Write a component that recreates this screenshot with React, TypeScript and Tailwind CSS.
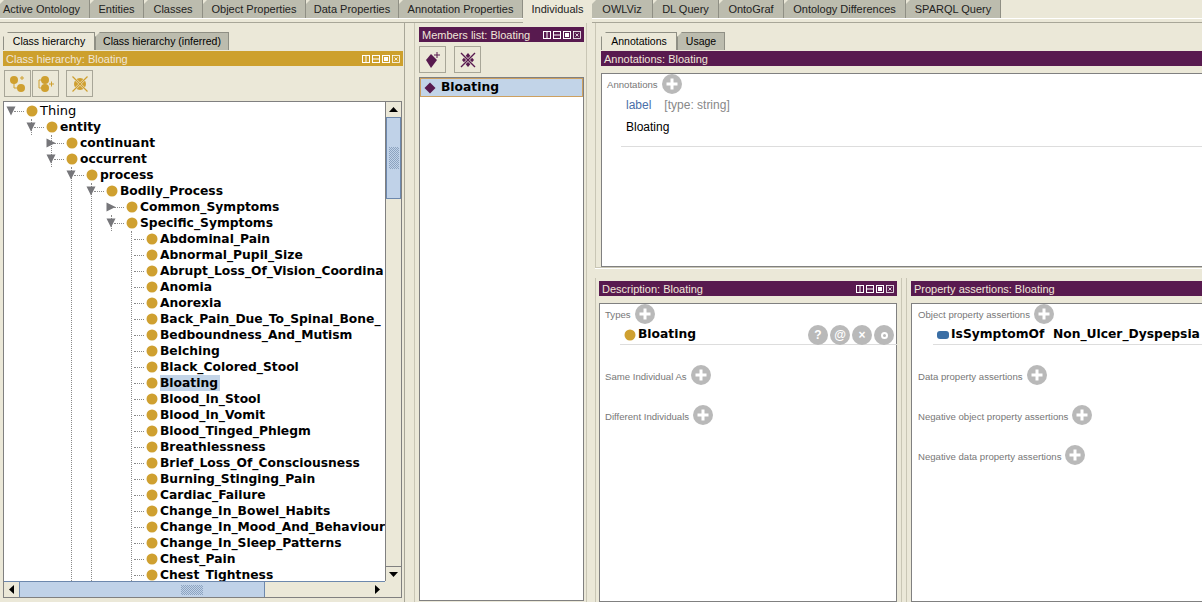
import React from "react";

const tabs = [
  ["Active Ontology", 90],
  ["Entities", 54],
  ["Classes", 59],
  ["Object Properties", 103],
  ["Data Properties", 93],
  ["Annotation Properties", 124],
  ["Individuals", 69],
  ["OWLViz", 61],
  ["DL Query", 66],
  ["OntoGraf", 65],
  ["Ontology Differences", 122],
  ["SPARQL Query", 95],
] as const;

const tree: [number, string, string, boolean?][] = [
  [0, "Thing", "d"],
  [1, "entity", "d"],
  [2, "continuant", "r"],
  [2, "occurrent", "d"],
  [3, "process", "d"],
  [4, "Bodily_Process", "d"],
  [5, "Common_Symptoms", "r"],
  [5, "Specific_Symptoms", "d"],
  [6, "Abdominal_Pain", ""],
  [6, "Abnormal_Pupil_Size", ""],
  [6, "Abrupt_Loss_Of_Vision_Coordina", ""],
  [6, "Anomia", ""],
  [6, "Anorexia", ""],
  [6, "Back_Pain_Due_To_Spinal_Bone_", ""],
  [6, "Bedboundness_And_Mutism", ""],
  [6, "Belching", ""],
  [6, "Black_Colored_Stool", ""],
  [6, "Bloating", "", true],
  [6, "Blood_In_Stool", ""],
  [6, "Blood_In_Vomit", ""],
  [6, "Blood_Tinged_Phlegm", ""],
  [6, "Breathlessness", ""],
  [6, "Brief_Loss_Of_Consciousness", ""],
  [6, "Burning_Stinging_Pain", ""],
  [6, "Cardiac_Failure", ""],
  [6, "Change_In_Bowel_Habits", ""],
  [6, "Change_In_Mood_And_Behaviour", ""],
  [6, "Change_In_Sleep_Patterns", ""],
  [6, "Chest_Pain", ""],
  [6, "Chest_Tightness", ""],
];

const ui = "font-['Liberation_Sans',sans-serif] text-[11px]";
const bold = "text-[12.3px] font-bold font-['DejaVu_Sans',sans-serif] text-black";

function Dot({ size = 12 }: { size?: number }) {
  return (
    <svg width={size} height={size} viewBox="0 0 12 12" className="shrink-0">
      <circle cx="6" cy="6" r="5.5" fill="#cfa030" />
    </svg>
  );
}

function WinControls() {
  return (
    <svg width="38" height="8" viewBox="0 0 38 8" className="shrink-0" fill="none" stroke="#fff">
      <rect x="0.5" y="0.5" width="7" height="7" />
      <path d="M4 0.5V7.5" />
      <rect x="10.5" y="0.5" width="7" height="7" />
      <path d="M10.5 4H17.5" />
      <rect x="20.5" y="0.5" width="7" height="7" />
      <rect x="22.5" y="2.5" width="3" height="3" fill="#fff" />
      <rect x="30.5" y="0.5" width="7" height="7" strokeWidth="0.8" />
      <path d="M32.5 2.5L35.5 5.5M35.5 2.5L32.5 5.5" strokeWidth="0.8" />
    </svg>
  );
}

function Header({ title, color, controls }: { title: string; color: string; controls?: boolean }) {
  return (
    <div
      className={`h-[15px] shrink-0 flex items-center justify-between pl-[3px] pr-[3px] text-[#f0e6d8] leading-none overflow-hidden whitespace-nowrap ${ui}`}
      style={{ backgroundColor: color }}
    >
      <span className="pt-[2px]">{title}</span>
      {controls && <WinControls />}
    </div>
  );
}

function ToolBtn({ children, className = "" }: { children: React.ReactNode; className?: string }) {
  return (
    <div className={`w-[27px] h-[27px] border border-[#a8a698] bg-[#ebe8d8] flex items-center justify-center ${className}`}>
      {children}
    </div>
  );
}

function Plus({ size = 20 }: { size?: number }) {
  return (
    <svg width={size} height={size} viewBox="0 0 20 20" className="shrink-0">
      <circle cx="10" cy="10" r="10" fill="#b9b9b9" />
      <path d="M10 4.5V15.5M4.5 10H15.5" stroke="#fff" strokeWidth="3" />
    </svg>
  );
}

function Arrow({ dir }: { dir: string }) {
  if (!dir) return null;
  return (
    <svg width="10" height="10" viewBox="0 0 10 10" className="absolute left-[-5px] top-[3px]">
      {dir === "d" ? <path d="M0.5 0.5H9.5L5 9.5Z" fill="#76767a" /> : <path d="M0.5 0.5V9.5L9.5 5Z" fill="#76767a" />}
    </svg>
  );
}

function TreeRow({ level, name, dir, sel }: { level: number; name: string; dir: string; sel?: boolean }) {
  const thing = name === "Thing";
  return (
    <div className="h-4 relative flex items-center whitespace-nowrap" style={{ paddingLeft: 20 * level + 22 }}>
      <div
        className="absolute h-0 border-t border-dotted border-[#8a8a8a] top-[8px] w-[10px]"
        style={{ left: 20 * level + 10 }}
      />
      <div className="absolute top-0" style={{ left: 20 * level + 7 }}>
        <Arrow dir={dir} />
      </div>
      <Dot />
      <span
        className={`ml-[2px] leading-4 ${bold} ${thing ? "font-normal text-[13px]" : ""} ${sel ? "bg-[#c2d4e8] pr-[2px]" : ""}`}
      >
        {name}
      </span>
    </div>
  );
}

function Triangle({ d }: { d: string }) {
  return (
    <svg width="9" height="9" viewBox="0 0 9 9">
      <path d={d} fill="#000" />
    </svg>
  );
}

function Grip({ vertical }: { vertical?: boolean }) {
  return (
    <svg width={vertical ? 10 : 22} height={vertical ? 22 : 10} className="shrink-0">
      {Array.from({ length: 22 }).map((_, i) =>
        Array.from({ length: 10 }).map((_, j) =>
          (i + j) % 2 === 0 ? (
            <rect key={`${i}-${j}`} x={vertical ? j : i} y={vertical ? i : j} width="1" height="1" fill="#8ca3c0" />
          ) : null
        )
      )}
    </svg>
  );
}

function SectionLabel({ text, className = "", textClass = "pt-[4px]" }: { text: string; className?: string; textClass?: string }) {
  return (
    <div className={`flex items-center gap-[4px] h-5 ${className}`}>
      <span className={`text-[9.6px] leading-none text-[#777] whitespace-nowrap font-['Liberation_Sans',sans-serif] ${textClass}`}>{text}</span>
      <Plus />
    </div>
  );
}

function Mini({ children }: { children: React.ReactNode }) {
  return (
    <div className="w-5 h-5 rounded-full bg-[#b9b9b9] flex items-center justify-center text-white font-bold text-[12px] leading-none font-['Liberation_Sans',sans-serif]">
      {children}
    </div>
  );
}

function SubTab({ label, active, w }: { label: string; active?: boolean; w: number }) {
  return (
    <div
      className={`h-[18px] flex items-center justify-center border border-b-0 border-[#8f8f84] whitespace-nowrap text-black font-['Liberation_Sans',sans-serif] text-[10.5px] ${active ? "bg-[#ebe8d8]" : "bg-[#bcbcae]"} [clip-path:polygon(5px_0,100%_0,100%_100%,0_100%,0_5px)]`}
      style={{ width: w }}
    >
      {label}
    </div>
  );
}

export default function App() {
  return (
    <div className="w-[1202px] h-[602px] bg-[#ebe8d8] overflow-hidden flex flex-col">
      <div className="h-[18px] shrink-0 flex">
        {tabs.map(([t, w], i) => (
          <div
            key={t}
            className={`shrink-0 flex items-center whitespace-nowrap text-[#222] ${ui} [clip-path:polygon(4px_0,100%_0,100%_100%,0_100%,0_4px)] ${
              i === 0 ? "justify-start pl-[3px]" : "justify-center"
            } ${t === "Individuals" ? "bg-[#ebe8d8] h-[23px] pb-[5px] z-10" : "bg-[#bcbcae] border-r border-[#8f8f84]"}`}
            style={{ width: w }}
          >
            {t}
          </div>
        ))}
      </div>
      <div className="h-[5px] shrink-0 border-b border-[#a8a698] border-t border-t-white" />
      <div className="flex-1 min-h-0 flex">
        {/* left */}
        <div className="w-[405px] shrink-0 pl-[2px] pt-[9px] border-r border-[#a8a698] flex flex-col">
          <div className="flex pl-[1px] h-[18px] shrink-0">
            <SubTab label="Class hierarchy" active w={92} />
            <SubTab label="Class hierarchy (inferred)" w={134} />
          </div>
          <div className="mt-[1px] mr-[1px] ml-[1px]">
            <Header title="Class hierarchy: Bloating" color="#cda02d" controls />
          </div>
          <div className="flex mt-[4px] h-[27px] pl-[2px] gap-[1px] shrink-0">
            <ToolBtn>
              <svg width="18" height="18" viewBox="0 0 18 18">
                <path d="M5 6V13H11" stroke="#cfa030" fill="none" />
                <circle cx="5" cy="5" r="4" fill="#cfa030" />
                <circle cx="12" cy="13" r="4" fill="#cfa030" />
                <path d="M11 3H15M13 1V5" stroke="#cfa030" />
              </svg>
            </ToolBtn>
            <ToolBtn>
              <svg width="18" height="18" viewBox="0 0 18 18">
                <path d="M5 5H2V13H5" stroke="#cfa030" fill="none" />
                <circle cx="8" cy="5" r="4" fill="#cfa030" />
                <circle cx="8" cy="13" r="4" fill="#cfa030" />
                <path d="M12 9H17M14.5 6.5V11.5" stroke="#cfa030" />
              </svg>
            </ToolBtn>
            <ToolBtn className="ml-[6px]">
              <svg width="18" height="18" viewBox="0 0 18 18">
                <circle cx="9" cy="9" r="6" fill="#cfa030" />
                <path d="M1.5 1.5L16.5 16.5M16.5 1.5L1.5 16.5" stroke="#ebe8d8" strokeWidth="2.4" />
                <path d="M1.5 1.5L16.5 16.5M16.5 1.5L1.5 16.5" stroke="#cfa030" strokeWidth="1.2" />
              </svg>
            </ToolBtn>
          </div>
          <div className="mt-[4px] ml-[1px] mr-[2px] flex-1 min-h-0 border border-[#808080] grid grid-cols-[1fr_16px] grid-rows-[1fr_16px] mb-[4px]">
            <div className="relative overflow-hidden bg-white">
              <div className="absolute left-[27px] top-[17px] h-[16px] border-l border-dotted border-[#8a8a8a]" />
              <div className="absolute left-[47px] top-[33px] h-[32px] border-l border-dotted border-[#8a8a8a]" />
              <div className="absolute left-[67px] top-[65px] h-[500px] border-l border-dotted border-[#8a8a8a]" />
              <div className="absolute left-[87px] top-[81px] h-[500px] border-l border-dotted border-[#8a8a8a]" />
              <div className="absolute left-[107px] top-[113px] h-[16px] border-l border-dotted border-[#8a8a8a]" />
              <div className="absolute left-[127px] top-[129px] h-[500px] border-l border-dotted border-[#8a8a8a]" />
              <div className="pt-[1px] relative">
                {tree.map(([l, n, d, s]) => (
                  <TreeRow key={n} level={l} name={n} dir={d} sel={s} />
                ))}
              </div>
            </div>
            <div className="flex flex-col bg-[#ebe8d8] border-l border-[#808080]">
              <div className="h-[15px] flex items-center justify-center shrink-0">
                <Triangle d="M4.5 2L9 7H0Z" />
              </div>
              <div className="h-[82px] bg-[#c0d2e8] border border-[#6d88ad] flex items-center justify-center shrink-0">
                <Grip vertical />
              </div>
              <div className="flex-1" />
              <div className="h-[15px] flex items-center justify-center shrink-0 border-t border-[#808080]">
                <Triangle d="M0 2H9L4.5 7Z" />
              </div>
            </div>
            <div className="flex bg-[#ebe8d8] border-t border-[#6d88ad]">
              <div className="w-[15px] flex items-center justify-center shrink-0">
                <Triangle d="M2 4.5L7 0V9Z" />
              </div>
              <div className="w-[246px] bg-[#c0d2e8] border-x border-[#6d88ad] flex items-center justify-center shrink-0 pl-[99px]">
                <Grip />
              </div>
              <div className="flex-1" />
              <div className="w-[15px] flex items-center justify-center shrink-0">
                <Triangle d="M2 0L7 4.5L2 9Z" />
              </div>
            </div>
            <div className="bg-[#ebe8d8]" />
          </div>
        </div>
        <div className="w-[9px] shrink-0" />
        {/* members */}
        <div className="w-[173px] shrink-0 border-x border-[#c9c6b5] pl-[4px] pr-[2px] pt-[4px] flex flex-col">
          <Header title="Members list: Bloating" color="#581a4f" controls />
          <div className="flex gap-[8px] h-[27px] mt-[4px] shrink-0">
            <ToolBtn>
              <svg width="18" height="18" viewBox="0 0 18 18">
                <path d="M7 3L13 9L7 17L2 9Z" fill="#581a4f" />
                <path d="M13 1V7M10 4H16" stroke="#581a4f" />
              </svg>
            </ToolBtn>
            <ToolBtn>
              <svg width="18" height="18" viewBox="0 0 18 18">
                <path d="M9 2L15 9L9 16L3 9Z" fill="#581a4f" />
                <path d="M2 2L16 16M16 2L2 16" stroke="#ebe8d8" strokeWidth="2.6" />
                <path d="M2 2L16 16M16 2L2 16" stroke="#581a4f" strokeWidth="1.4" />
              </svg>
            </ToolBtn>
          </div>
          <div className="mt-[4px] flex-1 bg-white border border-[#808080] mb-[1px] min-h-0">
            <div className="h-[19px] bg-[#c2d4e8] border border-[#cda060] flex items-center pl-[3px] gap-[5px]">
              <svg width="12" height="12" viewBox="0 0 12 12">
                <path d="M6 0.5L11.5 6L6 11.5L0.5 6Z" fill="#581a4f" />
              </svg>
              <span className={bold}>Bloating</span>
            </div>
          </div>
        </div>
        <div className="w-[8px] shrink-0" />
        {/* right */}
        <div className="flex-1 min-w-0 flex flex-col">
          <div className="h-[245px] shrink-0 border-l border-[#c9c6b5] pl-[5px] pt-[9px] flex flex-col border-b">
            <div className="flex h-[18px] shrink-0">
              <SubTab label="Annotations" active w={76} />
              <SubTab label="Usage" w={48} />
            </div>
            <div className="mt-[1px]">
              <Header title="Annotations: Bloating" color="#581a4f" />
            </div>
            <div className="mt-[7px] flex-1 bg-white border border-[#808080] border-r-0 pl-[5px] min-h-0">
              <SectionLabel text="Annotations" textClass="pt-[2px]" />
              <div className="ml-[19px] flex gap-[13px] h-5 items-center mt-[1px]">
                <span className={`${ui} text-[#4a6fa8] text-[12px]`}>label</span>
                <span className={`${ui} text-[#888] text-[12px]`}>[type: string]</span>
              </div>
              <div className={`ml-[19px] h-5 mt-[2px] flex items-center ${ui} text-[12px] text-black`}>Bloating</div>
              <div className="ml-[14px] mt-[9px] border-b border-[#ddd]" />
            </div>
          </div>
          <div className="flex-1 min-h-0 flex pt-[9px] border-t border-white">
            <div className="w-[307px] shrink-0 pl-[3px] pr-[4px] pt-[3px] flex flex-col border-r border-[#c9c6b5] border-l">
              <Header title="Description: Bloating" color="#581a4f" controls />
              <div className="mt-[7px] flex-1 bg-white border border-[#808080] pl-[5px] relative min-h-0">
                <SectionLabel text="Types" textClass="pt-[2px]" />
                <div className="ml-[15px] mt-[1px] h-[20px] flex items-center gap-[2px] border-b border-[#ddd] pl-[4px] -mr-[1px]">
                  <Dot />
                  <span className={bold}>Bloating</span>
                  <div className="ml-auto flex gap-[2px] pr-[3px] mt-[1px]">
                    <Mini>?</Mini>
                    <Mini>@</Mini>
                    <Mini>×</Mini>
                    <Mini>
                      <span className="w-[7px] h-[7px] rounded-full border-2 border-white" />
                    </Mini>
                  </div>
                </div>
                <SectionLabel text="Same Individual As" className="mt-[20px]" />
                <SectionLabel text="Different Individuals" className="mt-[20px]" />
              </div>
            </div>
            <div className="flex-1 min-w-0 pl-[4px] pt-[3px] flex flex-col ml-[4px] border-l border-[#c9c6b5]">
              <Header title="Property assertions: Bloating" color="#581a4f" />
              <div className="mt-[7px] flex-1 bg-white border border-[#808080] border-r-0 pl-[6px] min-h-0">
                <SectionLabel text="Object property assertions" textClass="pt-[2px]" />
                <div className="ml-[15px] mt-[1px] h-[20px] flex items-center gap-[2px] border-b border-[#ddd] pl-[4px] whitespace-nowrap overflow-hidden">
                  <span className="w-[12px] h-[8px] rounded-[3px] bg-[#3a6ea5] shrink-0" />
                  <span className={bold}>IsSymptomOf&nbsp;&nbsp;Non_Ulcer_Dyspepsia</span>
                </div>
                <SectionLabel text="Data property assertions" className="mt-[20px]" />
                <SectionLabel text="Negative object property assertions" className="mt-[20px]" />
                <SectionLabel text="Negative data property assertions" className="mt-[20px]" />
              </div>
            </div>
          </div>
        </div>
      </div>
    </div>
  );
}
